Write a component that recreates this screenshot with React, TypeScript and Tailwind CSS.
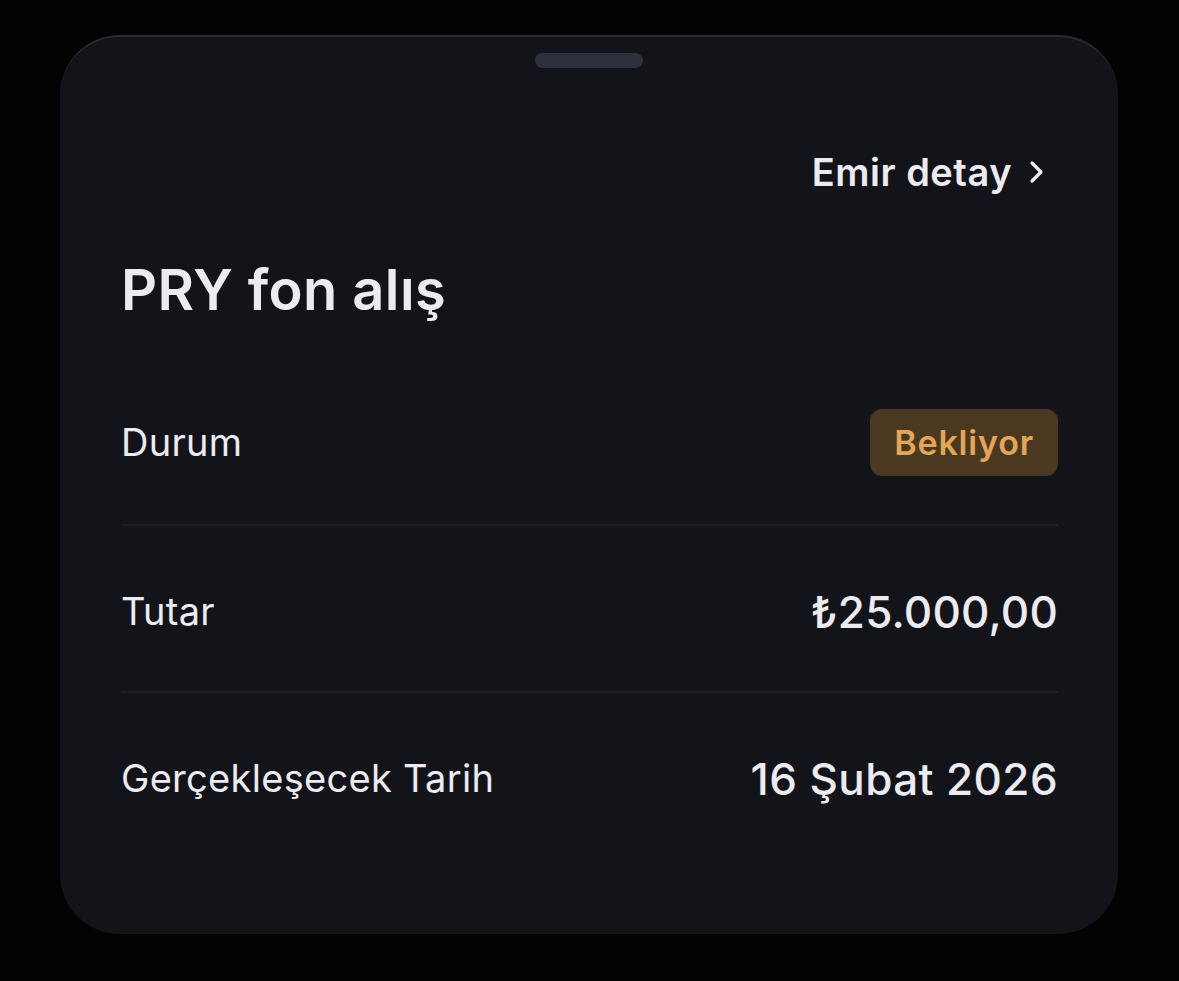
import React from "react";

type Row = { label: string; value: React.ReactNode };

function Chevron() {
  return (
    <svg width="18" height="28" viewBox="0 0 18 28" fill="none" className="ml-[16px]">
      <path d="M4 5l9 9-9 9" stroke="#ecebf2" strokeWidth="3.2" strokeLinecap="round" strokeLinejoin="round" />
    </svg>
  );
}

export default function App() {
  const rows: Row[] = [
    {
      label: "Durum",
      value: (
        <span className="flex h-[67px] items-center rounded-[12px] bg-[#4b3820] px-[24px] text-[34px] font-semibold tracking-[0.8px] text-[#e3a556]">
          Bekliyor
        </span>
      ),
    },
    {
      label: "Tutar",
      value: <span className="text-[44px] font-medium tracking-[0.2px]">₺25.000,00</span>,
    },
    {
      label: "Gerçekleşecek Tarih",
      value: <span className="text-[44px] font-medium tracking-[0.4px]">16 Şubat 2026</span>,
    },
  ];

  return (
    <div className="min-h-screen w-full bg-[#030303] pt-[35px] pl-[60px]" style={{ fontFamily: "Inter, 'Noto Sans', sans-serif" }}>
      <div className="flex h-[899px] w-[1058px] flex-col rounded-[60px] border-t-2 border-[#2a2b33] bg-[#131419] text-[#ecebf2]">
        <div className="mt-[16px] flex justify-center">
          <div className="h-[15px] w-[108px] rounded-full bg-[#2d303d]" />
        </div>

        <div className="mt-[82px] flex h-[44px] items-center justify-end pr-[72px]">
          <span className="text-[38px] font-semibold tracking-[0.5px]">Emir detay</span>
          <Chevron />
        </div>

        <h1 className="mt-[64px] pl-[61px] text-[56px] leading-[64px] font-semibold tracking-[0.4px]">PRY fon alış</h1>

        <div className="mt-[87px] flex flex-col px-[60px] pl-[61px]">
          {rows.map((r, i) => (
            <div key={r.label}>
              {i > 0 && <div className="h-[2px] bg-[#1e1f26]" />}
              <div
                className={
                  "flex h-[67px] items-center justify-between " +
                  (i === 0 ? "mb-[48px]" : i === 1 ? "mt-[52px] mb-[46px]" : "mt-[52px]")
                }
              >
                <span className="text-[38px] font-normal tracking-[0.3px]">{r.label}</span>
                {r.value}
              </div>
            </div>
          ))}
        </div>
      </div>
    </div>
  );
}
